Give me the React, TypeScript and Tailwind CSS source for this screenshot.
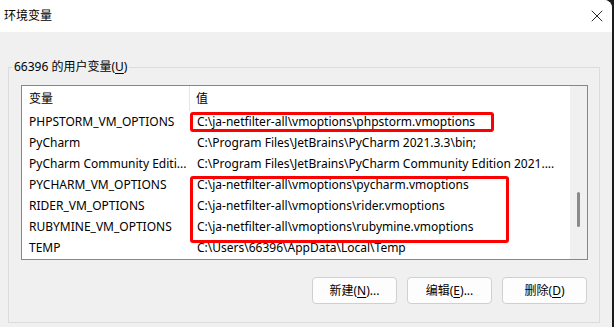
import { X } from "lucide-react";

type Row = { name: string; value: string };

const rows: Row[] = [
  { name: "PHPSTORM_VM_OPTIONS", value: "C:\\ja-netfilter-all\\vmoptions\\phpstorm.vmoptions" },
  { name: "PyCharm", value: "C:\\Program Files\\JetBrains\\PyCharm 2021.3.3\\bin;" },
  {
    name: "PyCharm Community Editi...",
    value: "C:\\Program Files\\JetBrains\\PyCharm Community Edition 2021....",
  },
  { name: "PYCHARM_VM_OPTIONS", value: "C:\\ja-netfilter-all\\vmoptions\\pycharm.vmoptions" },
  { name: "RIDER_VM_OPTIONS", value: "C:\\ja-netfilter-all\\vmoptions\\rider.vmoptions" },
  { name: "RUBYMINE_VM_OPTIONS", value: "C:\\ja-netfilter-all\\vmoptions\\rubymine.vmoptions" },
  { name: "TEMP", value: "C:\\Users\\66396\\AppData\\Local\\Temp" },
];

const font = "font-['Noto_Sans','Noto_Sans_CJK_SC',sans-serif]";

function Button({ label, hotkey, dots }: { label: string; hotkey: string; dots?: boolean }) {
  return (
    <button className="w-[85px] h-[27px] rounded-[4px] border border-[#d0d0d0] bg-[#fdfdfd] text-[12px] text-black flex items-center justify-center">
      {label}(<span className="underline underline-offset-2">{hotkey}</span>){dots ? "..." : ""}
    </button>
  );
}

export default function App() {
  return (
    <div className={`w-[614px] h-[327px] bg-[#1c1c1c] overflow-hidden ${font}`}>
      <div className="w-[612px] h-[327px] bg-[#f0f0f0] rounded-tr-[8px] overflow-hidden flex flex-col">
        {/* Title bar */}
        <div className="h-[32px] bg-white flex items-center justify-between pl-[4px] pr-[5px] shrink-0">
          <span className="text-[12px] text-black">环境变量</span>
          <X className="w-[20px] h-[20px] text-black" strokeWidth={1} />
        </div>

        {/* Body */}
        <fieldset className="mt-[27px] ml-[8px] w-[592px] h-[264px] border border-[#dcdcdc] p-0">
          <legend className="ml-[3px] px-[2px] text-[12px] leading-[16px] text-black">
            66396 的用户变量(<span className="underline underline-offset-2">U</span>)
          </legend>

          <div className="mt-[10px] ml-[12px] w-[567px] h-[175px] border border-[#828790] bg-white flex">
            <div className="relative flex-1 text-[12px] text-black">
              {/* Header */}
              <div className="h-[25px] flex">
                <div className="w-[168px] pl-[7px] flex items-center border-r border-[#e5e5e5]">变量</div>
                <div className="flex-1 pl-[6px] flex items-center">值</div>
              </div>
              {rows.map((r) => (
                <div key={r.name} className="h-[21px] flex items-center whitespace-nowrap">
                  <div className="w-[168px] pl-[7px] overflow-hidden">{r.name}</div>
                  <div className="flex-1 pl-[7px] overflow-hidden">{r.value}</div>
                </div>
              ))}

              {/* Annotations */}
              <div className="absolute left-[168px] top-[26px] w-[304px] h-[20px] border-[3px] border-[#ff0000] rounded-[3px]" />
              <div className="absolute left-[168px] top-[90px] w-[319px] h-[67px] border-[3px] border-[#ff0000] rounded-[3px]" />
            </div>
            {/* Scrollbar */}
            <div className="w-[17px] bg-[#f0f0f0] flex justify-center pt-[106px]">
              <div className="w-[3px] h-[35px] rounded-full bg-[#8a8a8a]" />
            </div>
          </div>

          <div className="mt-[17px] ml-[303px] flex gap-[10px]">
            <Button label="新建" hotkey="N" dots />
            <Button label="编辑" hotkey="E" dots />
            <Button label="删除" hotkey="D" />
          </div>
        </fieldset>
      </div>
    </div>
  );
}
